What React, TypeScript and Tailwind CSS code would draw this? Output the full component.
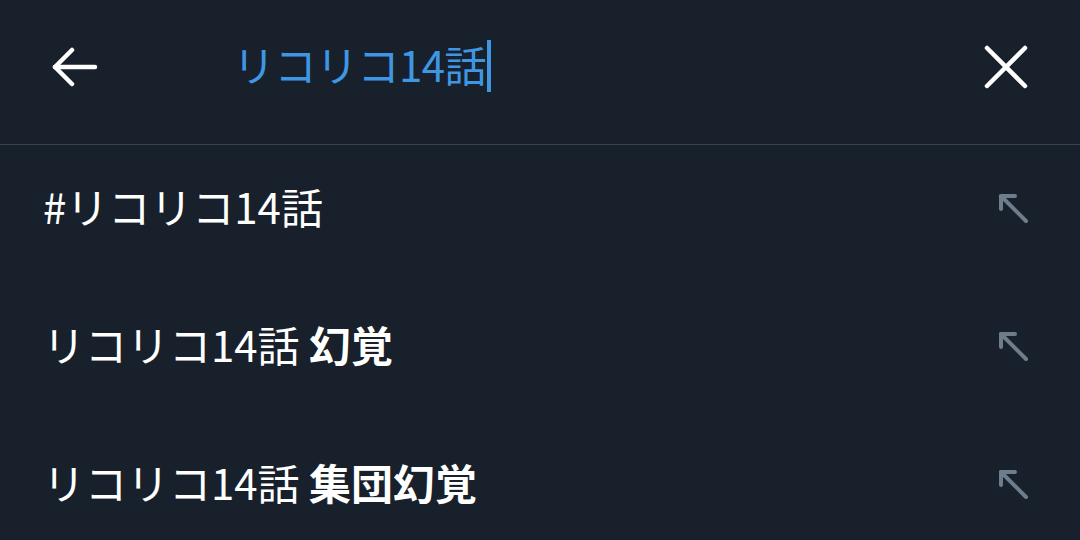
const font = "font-['Noto_Sans_CJK_JP','Noto_Sans',sans-serif]";

const ArrowUpLeft = () => (
  <svg width="34" height="34" viewBox="0 0 34 34" fill="none" stroke="#6e7d8b" strokeWidth="4" strokeLinecap="round" strokeLinejoin="round">
    <path d="M5 5L30 30" />
    <path d="M5 18V5h14" />
  </svg>
);

const rows = [
  { base: "#リコリコ14話", bold: "" },
  { base: "リコリコ14話 ", bold: "幻覚" },
  { base: "リコリコ14話 ", bold: "集団幻覚" },
];

export default function App() {
  return (
    <div className={`w-[1080px] h-[540px] overflow-hidden bg-[#17202b] ${font}`}>
      <div className="h-[145px] flex items-center pl-[52px] pr-[52px] border-b border-[#38444d]">
        <svg width="46" height="46" viewBox="0 0 46 46" fill="none" stroke="#ffffff" strokeWidth="4.5" strokeLinecap="round" strokeLinejoin="round" className="mt-[-10px]">
          <path d="M3 23H43" />
          <path d="M20 6L3 23l17 17" />
        </svg>
        <div className="ml-[135px] flex items-center mt-[-12px]">
          <span className="text-[42px] leading-none tracking-[-0.5px] text-[#3f97e4] mt-[-4px]">リコリコ14話</span>
          <span className="w-[4px] h-[52px] bg-[#3f97e4] ml-[1px]" />
        </div>
        <div className="flex-1" />
        <svg width="44" height="44" viewBox="0 0 44 44" fill="none" stroke="#ffffff" strokeWidth="4.5" strokeLinecap="round" className="mt-[-10px]">
          <path d="M3 3L41 41" />
          <path d="M41 3L3 41" />
        </svg>
      </div>
      {rows.map((r) => (
        <div key={r.bold + r.base} className="h-[138px] pb-[12px] flex items-center justify-between pl-[43px] pr-[50px]">
          <span className="text-[42px] leading-none text-white mt-[-5px]">
            {r.base}
            {r.bold && <b className="font-bold">{r.bold}</b>}
          </span>
          <ArrowUpLeft />
        </div>
      ))}
    </div>
  );
}
